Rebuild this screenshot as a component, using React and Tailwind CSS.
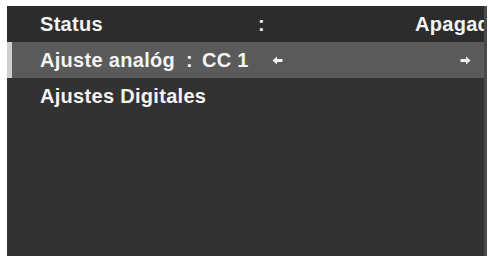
import React from 'react';

function Arrow({ dir }) {
  return (
    <svg width="11" height="9" viewBox="0 0 11 9" className="shrink-0">
      {dir === 'left' ? (
        <path d="M0.5 4.5 L5 0.5 L5 3 L10.5 3 L10.5 6 L5 6 L5 8.5 Z" fill="#f2f2f2" />
      ) : (
        <path d="M10.5 4.5 L6 0.5 L6 3 L0.5 3 L0.5 6 L6 6 L6 8.5 Z" fill="#f2f2f2" />
      )}
    </svg>
  );
}

export default function App() {
  return (
    <div className="w-[490px] h-[256px] bg-white pl-[7px] pr-[3px] pt-[6px] overflow-hidden">
      <div
        className="h-full bg-[#323232] border-r-[3px] border-[#4a4a4a] text-[#f4f4f4] font-bold text-[20px] leading-none tracking-[0.3px] overflow-hidden"
        style={{ fontFamily: '"Liberation Sans", Arial, sans-serif' }}
      >
        <div className="h-[36px] flex items-center bg-[#2c2c2c]">
          <span className="pl-[33px] w-[251px] shrink-0">Status</span>
          <span className="w-[157px] shrink-0">:</span>
          <span className="whitespace-nowrap">Apagado</span>
        </div>
        <div className="h-[36px] flex items-center bg-[#5a5a5a]">
          <div className="w-[5px] h-full bg-[#cfcfcf] shrink-0" />
          <span className="pl-[28px] w-[174px] shrink-0 whitespace-nowrap">Ajuste analóg</span>
          <span className="w-[16px] shrink-0">:</span>
          <span className="w-[70px] shrink-0 whitespace-nowrap">CC 1</span>
          <Arrow dir="left" />
          <span className="flex-1" />
          <span className="pr-[13px] flex"><Arrow dir="right" /></span>
        </div>
        <div className="h-[36px] flex items-center">
          <span className="pl-[33px]">Ajustes Digitales</span>
        </div>
      </div>
    </div>
  );
}
